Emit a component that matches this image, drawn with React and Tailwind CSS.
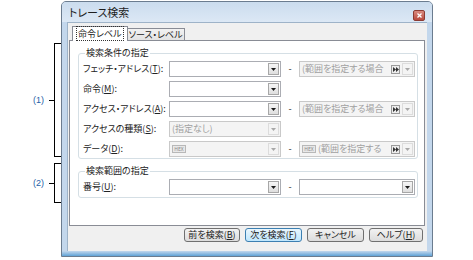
import { useState } from 'react'

const FONT = "font-['Noto_Sans_CJK_JP','Noto_Sans',sans-serif]"

// label text with the access key letter underlined, e.g. "命令(M):"
function Mn({ text, k, suffix = '' }) {
  return (
    <>
      {text}(<span className="underline underline-offset-1">{k}</span>){suffix}
    </>
  )
}

// small down-arrow button inside a combo box
function DropBtn({ disabled }) {
  return (
    <div className={`w-[11px] h-[12px] mr-[1px] flex items-center justify-center border ${disabled ? 'border-[#dcdcdc] bg-[#f4f4f4]' : 'border-[#a7a7a7] bg-gradient-to-b from-[#f6f6f6] to-[#dedede]'}`}>
      <svg width="5" height="3" viewBox="0 0 5 3">
        <path d="M0 0h5L2.5 3z" fill={disabled ? '#a8a8a8' : '#1a1a1a'} />
      </svg>
    </div>
  )
}

function RangeBtn() {
  return (
    <div className="w-[9px] h-[9px] mr-[2px] border border-[#9a9a9a] bg-[#ececec] flex items-center justify-center">
      <svg width="6" height="5" viewBox="0 0 6 5">
        <path d="M0 0l3 2.5L0 5zM3 0l3 2.5L3 5z" fill="#333" />
      </svg>
    </div>
  )
}

function Hex() {
  return (
    <span className="w-[14px] h-[8px] ml-[2px] mr-[2px] border border-[#b8b8b8] bg-[#e8e8e8] text-[#8a8a8a] text-[5px] leading-[6px] flex items-center justify-center">HEX</span>
  )
}

function Combo({ width, disabled, hex, range, text }) {
  return (
    <div className={`h-[16px] ${width} shrink-0 flex items-center border ${disabled ? 'border-[#c9c9c9] bg-[#f4f4f4]' : 'border-[#abadb3] bg-white'}`}>
      {hex && <Hex />}
      <span className={`flex-1 min-w-0 truncate text-[9px] leading-[14px] text-[#a0a0a0] ${hex ? '' : 'pl-[2px]'} [font-feature-settings:'palt']`}>{text}</span>
      {range && <RangeBtn />}
      <DropBtn disabled={disabled} />
    </div>
  )
}

function Row({ label, left, right }) {
  return (
    <div className="h-[16px] flex items-center">
      <span className="w-[86px] shrink-0 text-[9px] leading-[12px] text-[#222] [font-feature-settings:'palt']">{label}</span>
      {left}
      {right && (
        <>
          <span className="w-[18px] shrink-0 text-center text-[9px] leading-[12px] text-[#222]">-</span>
          {right}
        </>
      )}
    </div>
  )
}

function Group({ title, children, className }) {
  return (
    <fieldset className={`border border-[#d5dfe5] rounded-[3px] pl-[4px] pr-[2px] ${className}`}>
      <legend className="ml-[2px] px-[1px] text-[9px] leading-[12px] text-[#222] [font-feature-settings:'palt']">{title}</legend>
      {children}
    </fieldset>
  )
}

function Bracket({ label, height }) {
  return (
    <div className={`flex items-center ${height}`}>
      <span className="w-[33px] shrink-0" />
      <span className="w-[16px] shrink-0 text-[9px] leading-[12px] text-[#1f5fa8] font-['Liberation_Sans',sans-serif]">{label}</span>
      <span className="w-[5px] h-px bg-black shrink-0" />
      <div className="h-full w-[7px] border-l border-t border-b border-black" />
    </div>
  )
}

function Btn({ children, width, focused }) {
  return (
    <button className={`${width} h-[14px] rounded-[3px] border text-[9px] leading-[12px] text-[#222] [font-feature-settings:'palt'] ${focused ? 'border-[#3c7fb1] bg-gradient-to-b from-[#eaf6fd] to-[#bee6fd]' : 'border-[#707070] bg-gradient-to-b from-[#f2f2f2] to-[#dcdcdc]'}`}>
      {children}
    </button>
  )
}

export default function App() {
  const [tab, setTab] = useState(0)
  const rangeText = '(範囲を指定する場合'

  return (
    <div className={`w-[473px] h-[260px] bg-white flex overflow-hidden ${FONT}`}>
      {/* annotation brackets */}
      <div className="w-[61px] shrink-0 flex flex-col pt-[43px] gap-[6px]">
        <Bracket label="(1)" height="h-[114px]" />
        <Bracket label="(2)" height="h-[40px]" />
      </div>

      {/* dialog window */}
      <div className="mt-[1px] w-[372px] h-[256px] shrink-0 flex flex-col border border-[#6b7c8f] rounded-t-[5px] bg-[#c3d7ec]">
        <div className="h-[20px] shrink-0 flex items-center pl-[7px] pr-[7px] bg-gradient-to-b from-[#cbdcee] to-[#dce8f5] rounded-t-[4px]">
          <span className="flex-1 text-[11px] leading-[14px] text-[#1e1e1e] [font-feature-settings:'palt']">トレース検索</span>
          <div className="mt-[6px] w-[12px] h-[11px] rounded-[2px] border border-[#8c3b33] bg-gradient-to-b from-[#d98a80] to-[#b9493e] flex items-center justify-center">
            <svg width="5" height="5" viewBox="0 0 5 5">
              <path d="M0.5 0.5l4 4M4.5 0.5l-4 4" stroke="#fff" strokeWidth="1.3" />
            </svg>
          </div>
        </div>

        <div className="flex-1 mx-[5px] flex flex-col bg-[#f0f0f0] border-t border-l border-[#9eb3c8] pt-[3px]">
          {/* tabs */}
          <div className="h-[14px] flex items-end pl-[4px] relative z-10">
            <button onClick={() => setTab(0)} className={`h-[15px] -mb-px px-[3px] border border-b-0 border-[#898c95] text-[9px] leading-[12px] text-[#222] [font-feature-settings:'palt'] ${tab === 0 ? 'bg-white' : 'bg-[#ececec]'}`}>
              <span className="border border-dotted border-[#333] px-[1px]">命令レベル</span>
            </button>
            <button onClick={() => setTab(1)} className={`h-[12px] w-[57px] border border-l-0 border-b-0 border-[#898c95] text-[9px] leading-[11px] text-[#222] [font-feature-settings:'palt'] ${tab === 1 ? 'bg-white' : 'bg-gradient-to-b from-[#f2f2f2] to-[#e3e3e3]'}`}>
              ソース・レベル
            </button>
          </div>

          <div className="ml-[1px] w-[356px] h-[186px] border border-[#898c95] bg-white pl-[8px] pr-[6px] pt-[6px]">
            <Group title="検索条件の指定" className="pt-[2px] pb-[1px]">
              <div className="flex flex-col gap-[4px]">
                <Row label={<Mn text="フェッチ・アドレス" k="T" suffix=":" />} left={<Combo width="w-[112px]" />} right={<Combo width="w-[116px]" disabled range text={rangeText} />} />
                <Row label={<Mn text="命令" k="M" suffix=":" />} left={<Combo width="w-[112px]" />} />
                <Row label={<Mn text="アクセス・アドレス" k="A" suffix=":" />} left={<Combo width="w-[112px]" />} right={<Combo width="w-[116px]" disabled range text={rangeText} />} />
                <Row label={<Mn text="アクセスの種類" k="S" suffix=":" />} left={<Combo width="w-[112px]" disabled text="(指定なし)" />} />
                <Row label={<Mn text="データ" k="D" suffix=":" />} left={<Combo width="w-[112px]" disabled hex />} right={<Combo width="w-[116px]" disabled hex range text="(範囲を指定する" />} />
              </div>
            </Group>
            <Group title="検索範囲の指定" className="mt-[6px] pt-[2px] pb-[2px]">
              <Row label={<Mn text="番号" k="U" suffix=":" />} left={<Combo width="w-[112px]" />} right={<Combo width="w-[116px]" />} />
            </Group>
          </div>

          <div className="mt-[2px] flex justify-end gap-[5px] pr-[4px]">
            <Btn width="w-[56px]"><Mn text="前を検索" k="B" /></Btn>
            <Btn width="w-[57px]" focused><Mn text="次を検索" k="F" /></Btn>
            <Btn width="w-[57px]">キャンセル</Btn>
            <Btn width="w-[54px]"><Mn text="ヘルプ" k="H" /></Btn>
          </div>
        </div>
        <div className="h-[5px] shrink-0 bg-gradient-to-b from-[#c3d7ec] to-[#5fa3d6]" />
      </div>
    </div>
  )
}
